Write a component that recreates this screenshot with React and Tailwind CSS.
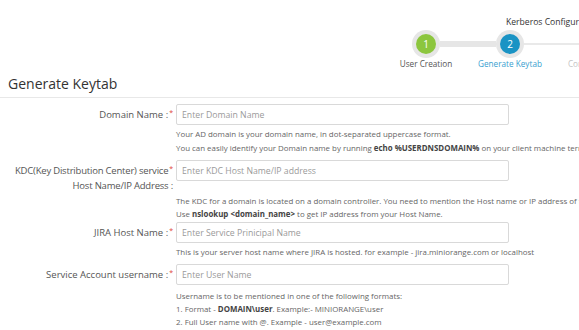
export default function App() {
  const Req = () => <span className="text-[#e0453a] text-[7px] align-top relative -top-[2px] ml-[1px]">*</span>;
  const inputCls = "ml-[3px] w-[333px] h-[21px] border border-[#d9d9d9] rounded-[2px] px-[5px] text-[8.7px] placeholder:text-[#9a9a9a] outline-none shrink-0";
  return (
    <div className="w-[579px] h-[330px] overflow-hidden bg-white font-['Open_Sans',sans-serif] text-[#555]">
      {/* Stepper */}
      <div className="pl-[506px] pt-[16px] text-[8.6px] leading-[12px] whitespace-nowrap text-[#333]">Kerberos Configuration</div>
      <div className="flex items-center mt-[2px] ml-[412px] w-[300px]">
        <div className="w-[28px] h-[28px] rounded-full bg-[#e6e6e6] flex items-center justify-center shrink-0">
          <div className="w-[20px] h-[20px] rounded-full bg-[#8cc63e] text-white text-[10px] flex items-center justify-center">1</div>
        </div>
        <div className="w-[56px] h-[6px] bg-[#e6e6e6] shrink-0" />
        <div className="w-[28px] h-[28px] rounded-full bg-[#e6e6e6] flex items-center justify-center shrink-0">
          <div className="w-[20px] h-[20px] rounded-full bg-[#1a93c4] text-white text-[10px] flex items-center justify-center">2</div>
        </div>
        <div className="flex-1 h-[2px] bg-[#e9e9e9]" />
      </div>
      <div className="flex ml-[384px] text-[8.2px] leading-[12px] whitespace-nowrap">
        <div className="w-[84px] shrink-0 text-center text-[#555]">User Creation</div>
        <div className="w-[84px] shrink-0 text-center text-[#3a9fd0]">Generate Keytab</div>
        <div className="w-[84px] shrink-0 text-center text-[#c4c4c4]">Configuration</div>
      </div>
      {/* Title */}
      <div className="mt-[4px] px-[8px] pb-[3px] border-b border-[#e8e8e8] text-[14px] leading-[20px] text-[#333]">Generate Keytab</div>

      {/* Form */}
      <div className="mt-[6px] text-[9.5px]">
        <div className="flex items-start">
          <div className="w-[173px] shrink-0 text-right leading-[21px] whitespace-nowrap">Domain Name :<Req /></div>
          <input className={inputCls} placeholder="Enter Domain Name" />
        </div>
        <div className="ml-[176px] mt-[2px] text-[7.9px] leading-[14px] text-[#666] whitespace-nowrap">
          <div>Your AD domain is your domain name, in dot-separated uppercase format.</div>
          <div>You can easily identify your Domain name by running <b className="text-[#444]">echo %USERDNSDOMAIN%</b> on your client machine terminal.</div>
        </div>

        <div className="flex items-start mt-[5px]">
          <div className="w-[173px] shrink-0 text-right leading-[15px] pt-[3px] whitespace-nowrap tracking-[-0.2px]">KDC(Key Distribution Center) service<Req /><br />Host Name/IP Address :</div>
          <input className={inputCls} placeholder="Enter KDC Host Name/IP address" />
        </div>
        <div className="ml-[176px] mt-[2px] text-[7.9px] leading-[13px] text-[#666] whitespace-nowrap">
          <div>The KDC for a domain is located on a domain controller. You need to mention the Host name or IP address of the domain controller.</div>
          <div>Use <b className="text-[#444]">nslookup &lt;domain_name&gt;</b> to get IP address from your Host Name.</div>
        </div>

        <div className="flex items-start mt-[1px]">
          <div className="w-[173px] shrink-0 text-right leading-[21px] whitespace-nowrap">JIRA Host Name :<Req /></div>
          <input className={inputCls} placeholder="Enter Service Prinicipal Name" />
        </div>
        <div className="ml-[176px] mt-[3px] text-[7.9px] leading-[13px] text-[#666] whitespace-nowrap">
          <div>This is your server host name where JIRA is hosted. for example - jira.miniorange.com or localhost</div>
        </div>

        <div className="flex items-start mt-[5px]">
          <div className="w-[173px] shrink-0 text-right leading-[21px] whitespace-nowrap">Service Account username :<Req /></div>
          <input className={inputCls} placeholder="Enter User Name" />
        </div>
        <div className="ml-[176px] mt-[5px] text-[7.9px] leading-[13px] text-[#666] whitespace-nowrap">
          <div>Username is to be mentioned in one of the following formats:</div>
          <div>1. Format - <b className="text-[#444]">DOMAIN\user</b>. Example:- MINIORANGE\user</div>
          <div>2. Full User name with @. Example - user@example.com</div>
        </div>
      </div>
    </div>
  );
}
